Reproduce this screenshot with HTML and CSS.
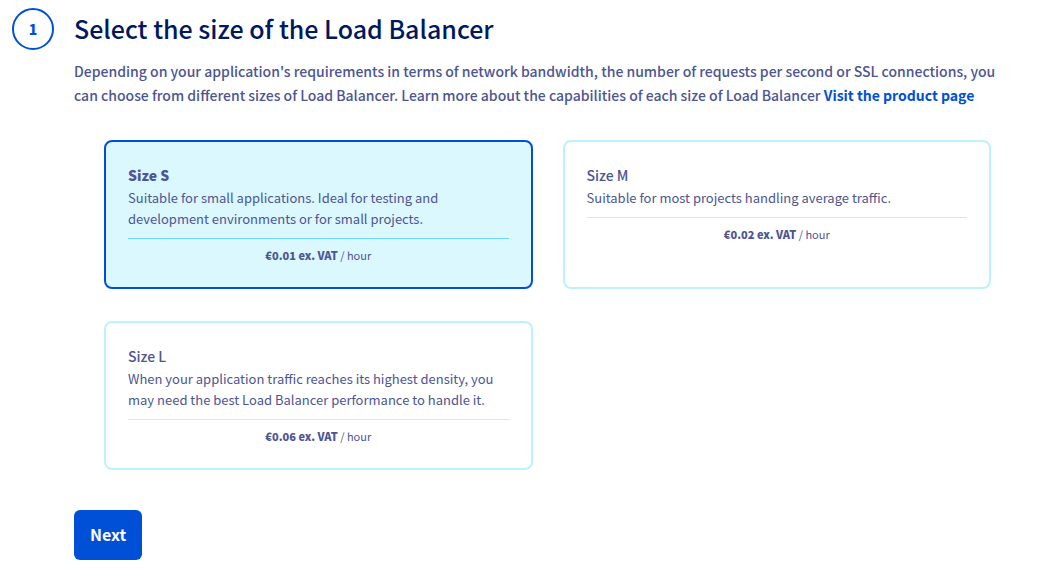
FILE: index.html
```html
<!DOCTYPE html>
<html lang="en">
<head>
<meta charset="utf-8">
<meta name="viewport" content="width=device-width, initial-scale=1">
<title>Select the size of the Load Balancer</title>
<link rel="stylesheet" href="styles.css">
</head>
<body>
<main class="step">
  <div class="step-number">1</div>
  <form class="step-body">
    <h1 class="step-title" id="step-title">Select the size of the Load Balancer</h1>
    <p class="step-intro">Depending on your application's requirements in terms of network bandwidth, the number of requests per second or SSL connections, you can choose from different sizes of Load Balancer. Learn more about the capabilities of each size of Load Balancer <a class="link" href="#product">Visit the product page</a></p>
    <div class="sizes" role="radiogroup" aria-labelledby="step-title">
      <label class="card">
        <input class="card-radio" type="radio" name="size" value="s" checked>
        <span class="card-name">Size S</span>
        <span class="card-text">Suitable for small applications. Ideal for testing and development environments or for small projects.</span>
        <span class="card-price"><strong>€0.01 ex. VAT</strong> / hour</span>
      </label>
      <label class="card">
        <input class="card-radio" type="radio" name="size" value="m">
        <span class="card-name">Size M</span>
        <span class="card-text">Suitable for most projects handling average traffic.</span>
        <span class="card-price"><strong>€0.02 ex. VAT</strong> / hour</span>
      </label>
      <label class="card">
        <input class="card-radio" type="radio" name="size" value="l">
        <span class="card-name">Size L</span>
        <span class="card-text">When your application traffic reaches its highest density, you may need the best Load Balancer performance to handle it.</span>
        <span class="card-price"><strong>€0.06 ex. VAT</strong> / hour</span>
      </label>
    </div>
    <button class="next" type="button">Next</button>
  </form>
</main>
</body>
</html>
```
FILE: styles.css
```css
* {
  box-sizing: border-box;
}

body {
  margin: 0;
  background: #fff;
  color: #4d5592;
  font-family: "Source Sans Pro", "Noto Sans CJK SC", sans-serif;
  font-size: 14px;
  line-height: 24px;
}

.step {
  display: flex;
  gap: 20px;
  padding: 8px 25px 12px 12px;
}

.step-number {
  display: flex;
  flex: none;
  align-items: center;
  justify-content: center;
  width: 42px;
  height: 42px;
  border: 2px solid #0050d7;
  border-radius: 50%;
  color: #0050d7;
  font-weight: 900;
}

.step-body {
  flex: 1;
  min-width: 0;
}

.step-title {
  margin: 0;
  color: #00185e;
  font-size: 25px;
  font-weight: 500;
  line-height: 40px;
}

.step-intro {
  margin: 0;
  padding: 11px 10px 0 0;
  font-weight: 500;
}

.link {
  color: #0050d7;
  font-weight: 700;
  text-decoration: none;
}

.sizes {
  display: grid;
  grid-template-columns: repeat(2, 1fr);
  gap: 32px 30px;
  padding: 33px 30px 40px;
}

.card {
  display: flex;
  flex-direction: column;
  position: relative;
  padding: 21px 22px 15px;
  border: 2px solid #bef1ff;
  border-radius: 8px;
  cursor: pointer;
}

.card:has(.card-radio:checked) {
  border-color: #0050d7;
  background: #dbf8ff;
}

.card-radio {
  position: absolute;
  margin: 0;
  opacity: 0;
}

.card-name {
  font-weight: 500;
  line-height: 24px;
}

.card-radio:checked + .card-name {
  font-weight: 900;
}

.card-text {
  padding-bottom: 9px;
  border-bottom: 1px solid #bef1ff;
  font-size: 13px;
  line-height: 21px;
}

.card:has(.card-radio:checked) .card-text {
  border-bottom-color: #6fd7ff;
}

.card-price {
  padding: 7px 0 8px;
  font-size: 11px;
  line-height: 18px;
  text-align: center;
}

.card-price strong {
  font-weight: 900;
}

.next {
  display: block;
  height: 50px;
  padding: 0 16px 2px;
  border: 0;
  border-radius: 6px;
  background: #0050d7;
  color: #fff;
  font: inherit;
  font-size: 16px;
  font-weight: 700;
  cursor: pointer;
}
```
